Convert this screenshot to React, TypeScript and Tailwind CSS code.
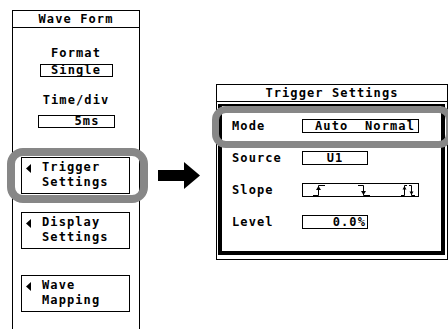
import React from "react";

const Tri = () => (
  <svg width="5" height="9" viewBox="0 0 5 9" className="block">
    <polygon points="5,0 5,9 0,4.5" fill="black" />
  </svg>
);

const MenuButton = ({ l1, l2, mt }: { l1: string; l2: string; mt: string }) => (
  <div className={`${mt} ml-[8px] w-[109px] h-[37px] border border-black flex pt-[2px] pl-[4px]`}>
    <div className="pt-[4px]">
      <Tri />
    </div>
    <div className="ml-[11px] flex flex-col leading-[15px]">
      <span>{l1}</span>
      <span>{l2}</span>
    </div>
  </div>
);

const Rising = () => (
  <svg width="12" height="11" viewBox="0 0 12 11" className="block">
    <path d="M0 10.5 H5.5 V0.5 H12" stroke="black" strokeWidth="1" fill="none" />
    <polygon points="5.5,1 3,5 8,5" fill="black" />
  </svg>
);
const Falling = () => (
  <svg width="12" height="11" viewBox="0 0 12 11" className="block">
    <path d="M0 0.5 H5.5 V10.5 H12" stroke="black" strokeWidth="1" fill="none" />
    <polygon points="5.5,10 3,6 8,6" fill="black" />
  </svg>
);
const Both = () => (
  <svg width="14" height="11" viewBox="0 0 14 11" className="block">
    <path d="M0 10.5 H3.5 V0.5 H6" stroke="black" strokeWidth="1" fill="none" />
    <polygon points="3.5,1 1.5,4.5 5.5,4.5" fill="black" />
    <path d="M8 0.5 H10.5 V10.5 H14" stroke="black" strokeWidth="1" fill="none" />
    <polygon points="10.5,10 8.5,6.5 12.5,6.5" fill="black" />
  </svg>
);

const Row = ({ label, children }: { label: string; children: React.ReactNode }) => (
  <div className="h-[32px] flex items-center">
    <span className="w-[70px]">{label}</span>
    {children}
  </div>
);

export default function App() {
  return (
    <div className="relative w-[448px] h-[329px] bg-white overflow-hidden flex font-['DejaVu_Sans_Mono',monospace] font-bold text-[12px] tracking-[1.1px] text-black leading-[13px]">
      {/* Left panel */}
      <div className="ml-[12px] mt-[10px] w-[128px] h-[319px] border-t border-x border-black flex flex-col">
        <div className="h-[17px] border-b border-black flex items-center justify-center">Wave Form</div>
        <div className="mt-[19px] text-center">Format</div>
        <div className="mt-[4px] self-center w-[73px] h-[13px] border border-black flex items-center justify-center leading-[11px]">Single</div>
        <div className="mt-[17px] text-center">Time/div</div>
        <div className="mt-[8px] self-center w-[77px] h-[13px] border border-black flex items-center justify-end pr-[14px] leading-[11px]">5ms</div>
        <MenuButton mt="mt-[29px]" l1="Trigger" l2="Settings" />
        <MenuButton mt="mt-[18px]" l1="Display" l2="Settings" />
        <MenuButton mt="mt-[26px]" l1="Wave" l2="Mapping" />
      </div>

      {/* Arrow */}
      <div className="ml-[18px] mt-[162px]">
        <svg width="42" height="27" viewBox="0 0 42 27" className="block">
          <rect x="0" y="8" width="27" height="11" fill="black" />
          <polygon points="26,0 42,13.5 26,27" fill="black" />
        </svg>
      </div>

      {/* Dialog */}
      <div className="ml-[16px] mt-[84px] w-[232px] h-[176px] border border-black flex flex-col">
        <div className="h-[17px] shrink-0 border-b border-black flex items-center justify-center">Trigger Settings</div>
        <div className="flex-1 mt-[2px] ml-[1px] mr-[2px] mb-[4px] border-l-4 border-r-4 border-b-4 border-t-2 border-black pt-[4px] pl-[10px] flex flex-col">
          <Row label="Mode">
            <div className="w-[117px] h-[14px] border border-black flex items-center justify-between pl-[12px] pr-[3px] leading-[11px]">
              <span>Auto</span>
              <span>Normal</span>
            </div>
          </Row>
          <Row label="Source">
            <div className="w-[66px] h-[14px] border border-black flex items-center justify-center leading-[11px]">U1</div>
          </Row>
          <Row label="Slope">
            <div className="w-[117px] h-[14px] border border-black flex items-center pl-[10px]">
              <Rising />
              <div className="ml-[33px]"><Falling /></div>
              <div className="ml-[31px]"><Both /></div>
            </div>
          </Row>
          <Row label="Level">
            <div className="w-[66px] h-[14px] border border-black flex items-center justify-end pr-[1px] leading-[11px]">0.0%</div>
          </Row>
        </div>
      </div>

      {/* Highlight rings */}
      <div className="absolute left-[7px] top-[148px] w-[141px] h-[55px] border-[8px] border-[#878787] rounded-[16px]" />
      <div className="absolute left-[212px] top-[106px] w-[241px] h-[42px] border-[7px] border-[#878787] rounded-[14px]" />
    </div>
  );
}
